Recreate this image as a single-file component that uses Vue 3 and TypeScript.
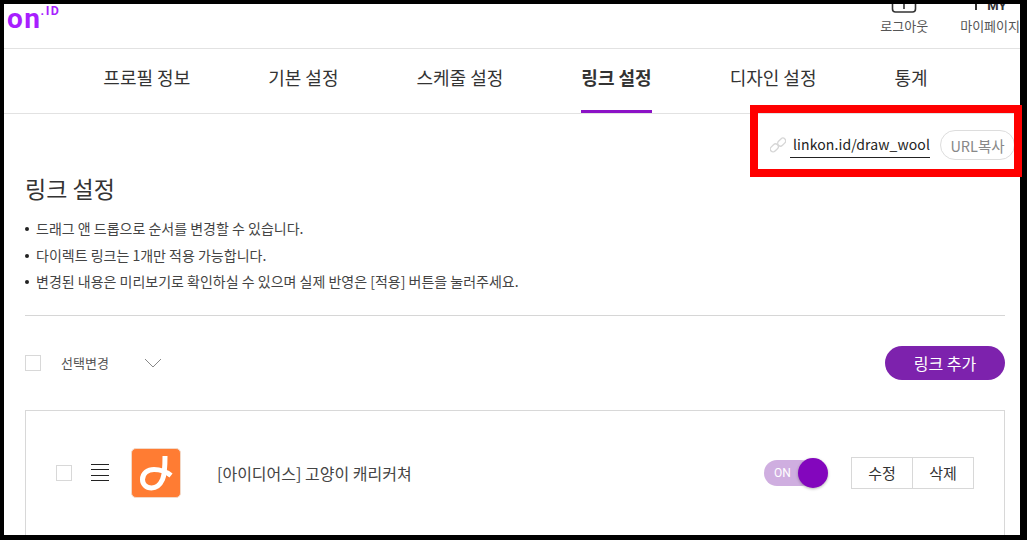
<template>
  <div class="frame">
    <div class="page">
      <header class="top">
        <div class="logo">on<span class="logo-id">.ID</span></div>
        <div class="top-actions">
          <a class="top-action">
            <svg class="top-icon" width="26" height="9" viewBox="0 0 26 9">
              <path d="M1.500 -6V5a3 3 0 0 0 3 3H21.500a3 3 0 0 0 3-3V-6" fill="none" stroke="#333" stroke-width="1.600" />
              <path d="M13 0V5" stroke="#333" stroke-width="1.600" />
            </svg>
            <span>로그아웃</span>
          </a>
          <a class="top-action">
            <div class="my-mark"><i></i><b>MY</b></div>
            <span>마이페이지</span>
          </a>
        </div>
      </header>

      <nav class="tabs">
        <a v-for="tab in tabs" :key="tab" class="tab" :class="{ active: tab === activeTab }">{{ tab }}</a>
      </nav>

      <div class="url-row">
        <svg class="link-icon" width="16" height="16" viewBox="0 0 16 16" fill="none" stroke="#d6d6d6" stroke-width="1.300">
          <rect x="7.200" y="2.300" width="9" height="5.600" rx="2.800" transform="rotate(-45 11.700 5.100)" />
          <rect x="-0.200" y="8.100" width="9" height="5.600" rx="2.800" transform="rotate(-45 4.300 10.900)" />
        </svg>
        <span class="url-text">linkon.id/draw_wool</span>
        <button class="url-copy">URL복사</button>
      </div>

      <main class="content">
        <h1 class="title">링크 설정</h1>
        <ul class="notes">
          <li v-for="note in notes" :key="note">{{ note }}</li>
        </ul>
        <hr class="divider" />

        <div class="toolbar">
          <span class="check"></span>
          <span class="select-label">선택변경</span>
          <svg class="chevron" width="18" height="10" viewBox="0 0 18 10" fill="none" stroke="#888" stroke-width="1">
            <path d="M1 1l8 8 8-8" />
          </svg>
          <button class="add-btn">링크 추가</button>
        </div>

        <div class="card">
          <span class="check"></span>
          <span class="drag"><i></i><i></i><i></i><i></i></span>
          <div class="thumb">
            <svg width="48" height="48" viewBox="1 1 48 48" fill="none" stroke="#fff" stroke-width="5">
              <path d="M34 8C34 18 34 26 31.500 31.500C29 37 25 40 20.500 40C15 40 11.500 36 11.500 31.500C11.500 25 17 21.500 23 21.500C29 21.500 35 23.500 40 27.500" />
            </svg>
          </div>
          <span class="card-title">[아이디어스] 고양이 캐리커쳐</span>
          <div class="toggle">
            <span class="toggle-label">ON</span>
            <span class="knob"></span>
          </div>
          <div class="card-btns">
            <button>수정</button>
            <button>삭제</button>
          </div>
        </div>
      </main>
    </div>
    <div class="callout"></div>
  </div>
</template>

<script setup lang="ts">
const tabs = ['프로필 정보', '기본 설정', '스케줄 설정', '링크 설정', '디자인 설정', '통계']
const activeTab = '링크 설정'
const notes = [
  '드래그 앤 드롭으로 순서를 변경할 수 있습니다.',
  '다이렉트 링크는 1개만 적용 가능합니다.',
  '변경된 내용은 미리보기로 확인하실 수 있으며 실제 반영은 [적용] 버튼을 눌러주세요.',
]
</script>

<style>
html,
body {
  margin: 0;
  background: #000;
}
</style>

<style scoped>
.frame {
  position: relative;
  width: 1027px;
  height: 540px;
  padding: 4px 7px 5px 4px;
  box-sizing: border-box;
  overflow: hidden;
  background: #000;
  font-family: "Noto Sans CJK KR", "Noto Sans", sans-serif;
  color: #333;
}

.page {
  height: 100%;
  background: #fff;
  overflow: hidden;
}

.top {
  display: flex;
  justify-content: space-between;
  height: 44px;
  border-bottom: 1px solid #e2e2e2;
}

.logo {
  margin: 1px 0 0 3px;
  font-family: Roboto, sans-serif;
  font-weight: 700;
  font-size: 28px;
  line-height: 28px;
  letter-spacing: 1.500px;
  color: #a81fff;
}

.logo-id {
  position: relative;
  top: -13px;
  margin-left: -1px;
  font-size: 12.500px;
  font-weight: 700;
  letter-spacing: 1.500px;
}

.top-actions {
  display: flex;
  gap: 32px;
}

.top-action {
  display: flex;
  flex-direction: column;
  align-items: center;
  font-size: 13px;
  line-height: 18px;
  color: #555;
}

.top-icon {
  display: block;
  margin-bottom: 4px;
}

.my-mark {
  display: flex;
  align-items: flex-end;
  width: 100%;
  height: 6px;
  margin-bottom: 7px;
  padding-left: 15px;
  box-sizing: border-box;
  font-family: Roboto, sans-serif;
  color: #333;
}

.my-mark i {
  display: block;
  width: 2px;
  height: 6px;
  margin-right: 10px;
  background: #333;
}

.my-mark b {
  height: 9px;
  font-size: 13px;
  line-height: 9px;
}

.tabs {
  display: flex;
  justify-content: center;
  gap: 78px;
  height: 64px;
  padding-left: 7px;
  border-bottom: 1px solid #e2e2e2;
}

.tab {
  font-size: 18px;
  line-height: 57px;
  color: #333;
}

.tab.active {
  height: 61px;
  font-weight: 700;
  border-bottom: 3px solid #8b12c6;
}

.url-row {
  display: flex;
  align-items: center;
  justify-content: flex-end;
  height: 59px;
  padding: 3px 5px 0 0;
  box-sizing: border-box;
}

.link-icon {
  margin-right: 4px;
}

.url-text {
  padding: 0 0 2px 3px;
  font-size: 14px;
  line-height: 22px;
  letter-spacing: 0.1px;
  color: #222;
  border-bottom: 1px solid #222;
}

.url-copy {
  width: 75px;
  height: 30px;
  margin-left: 10px;
  padding: 0;
  border: 1px solid #ddd;
  border-radius: 15px;
  background: #fff;
  font: inherit;
  font-size: 14.500px;
  color: #888;
}

.content {
  padding: 0 15px 0 21px;
}

.title {
  margin: 0;
  font-size: 23px;
  line-height: 30px;
  font-weight: 400;
  color: #333;
}

.notes {
  margin: 12px 0 0;
  padding: 0;
  list-style: none;
  font-size: 14px;
  line-height: 26.500px;
  color: #444;
}

.notes li::before {
  content: "";
  display: inline-block;
  width: 4px;
  height: 4px;
  margin-right: 7px;
  border-radius: 50%;
  background: #222;
  vertical-align: 3px;
}

.divider {
  margin: 20px 0 0;
  border: 0;
  border-top: 1px solid #d6d6d6;
}

.toolbar {
  display: flex;
  align-items: center;
  height: 94px;
}

.check {
  display: block;
  flex: none;
  width: 14px;
  height: 14px;
  border: 1px solid #d8d8d8;
  background: #fff;
}

.select-label {
  margin-left: 20px;
  font-size: 13px;
  color: #555;
}

.chevron {
  margin-left: 35px;
}

.add-btn {
  width: 120px;
  height: 34px;
  margin-left: auto;
  border: 0;
  border-radius: 17px;
  background: #7d22ad;
  color: #fff;
  font: inherit;
  font-size: 16px;
}

.card {
  display: flex;
  align-items: center;
  height: 124px;
  padding: 0 30px;
  border: 1px solid #d8d8d8;
}

.drag {
  display: flex;
  flex-direction: column;
  gap: 4.500px;
  margin-left: 19px;
}

.drag i {
  display: block;
  width: 18px;
  height: 1px;
  background: #222;
}

.thumb {
  flex: none;
  width: 50px;
  height: 50px;
  margin-left: 22px;
  box-sizing: border-box;
  border: 1px solid #f3d9c8;
  border-radius: 5px;
  background: #ff7c33;
}

.thumb svg {
  display: block;
}

.card-title {
  margin-left: 36px;
  font-size: 16px;
  color: #444;
}

.toggle {
  position: relative;
  width: 50px;
  height: 26px;
  margin-left: auto;
  border-radius: 13px;
  background: #cfaee0;
}

.toggle-label {
  position: absolute;
  left: 10px;
  top: 0;
  font-family: Roboto, sans-serif;
  font-size: 12px;
  line-height: 26px;
  color: #fff;
}

.knob {
  position: absolute;
  right: -14px;
  top: -2px;
  width: 30px;
  height: 30px;
  border-radius: 50%;
  background: #8306bd;
  box-shadow: 0 1px 3px rgba(0, 0, 0, 0.3);
}

.card-btns {
  display: flex;
  margin-left: 37px;
  border: 1px solid #d8d8d8;
}

.card-btns button {
  width: 60px;
  height: 30px;
  padding: 0;
  border: 0;
  background: #fff;
  font: inherit;
  font-size: 15px;
  color: #333;
}

.card-btns button + button {
  width: 61px;
  border-left: 1px solid #d8d8d8;
}

/* annotation drawn on top of the screenshot */
.callout {
  position: absolute;
  left: 750px;
  top: 105px;
  width: 272px;
  height: 72px;
  box-sizing: border-box;
  border: 8px solid #f00;
  pointer-events: none;
}
</style>
